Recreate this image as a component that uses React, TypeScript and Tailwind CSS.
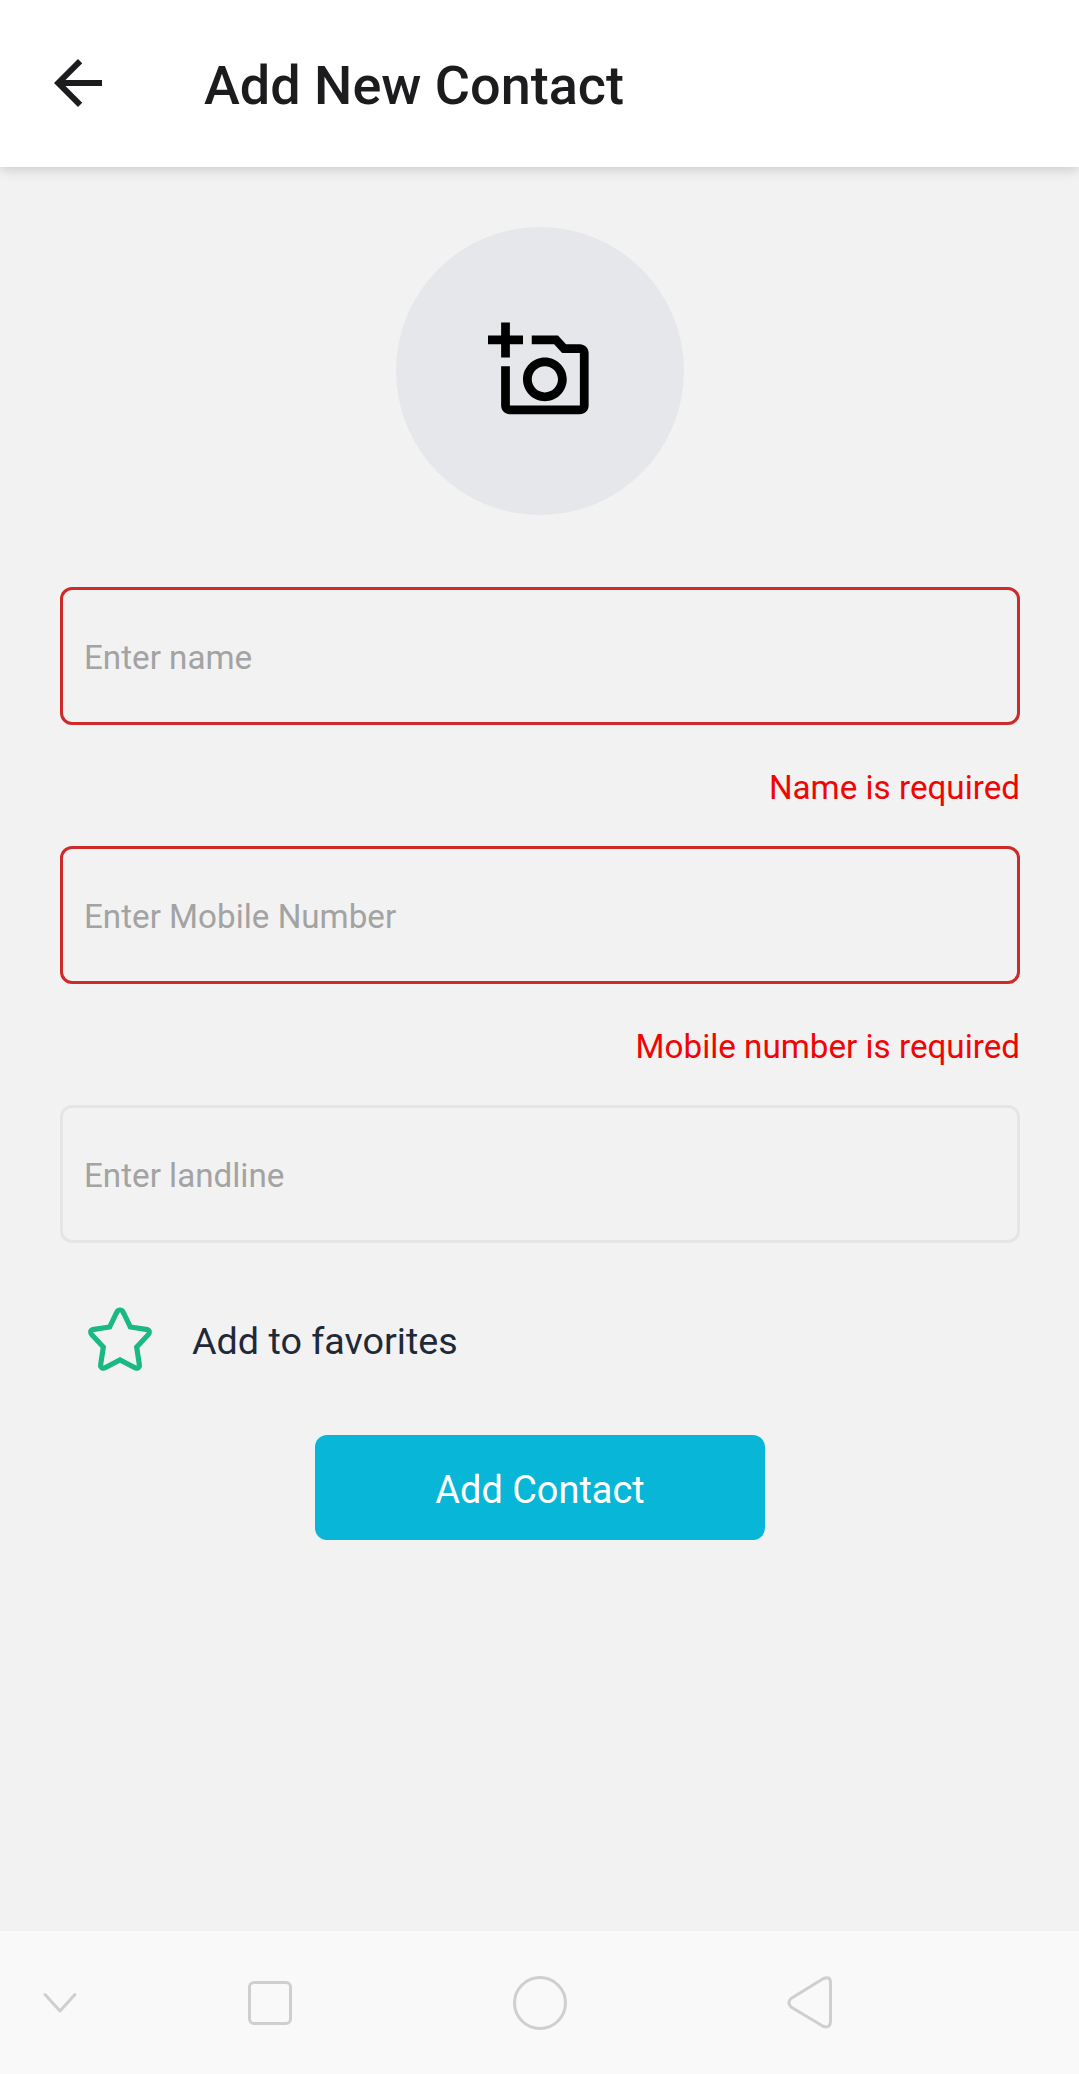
import React from "react";

function Field({ label, invalid }: { label: string; invalid?: boolean }) {
  return (
    <input
      type="text"
      placeholder={label}
      aria-invalid={invalid}
      className={
        "block h-[138px] w-full rounded-[12px] border-[3px] bg-transparent px-[21px] pt-[3px] text-[33.2px] text-gray-800 outline-none placeholder:text-[#a3a3a3] placeholder:opacity-100 " +
        (invalid ? "border-[#cd2a2a]" : "border-[#e5e5e5]")
      }
    />
  );
}

function FieldError({ children }: { children: React.ReactNode }) {
  return (
    <p className="flex h-[121px] items-center justify-end pt-[4px] text-[33.2px] text-[#f00505]">
      {children}
    </p>
  );
}

function Header() {
  return (
    <header className="relative z-10 flex h-[167px] shrink-0 items-center bg-white pl-[42px] shadow-[0_2px_12px_rgba(0,0,0,0.18)]">
      <button aria-label="Back" className="mb-[2px] size-[72px]">
        <svg viewBox="0 0 24 24" className="size-[72px] fill-[#1c1c1e]">
          <path d="M20 11H7.83l5.59-5.59L12 4l-8 8 8 8 1.41-1.41L7.83 13H20v-2z" />
        </svg>
      </button>
      <h1 className="ml-[90px] pt-[5px] text-[54px] leading-[64px] font-medium whitespace-nowrap text-[#1c1c1e]">
        Add New Contact
      </h1>
    </header>
  );
}

function SystemNav() {
  return (
    <nav className="flex h-[143px] shrink-0 items-center bg-[#f9f9f9] text-[#cfcfcf]">
      <div className="flex w-[120px] justify-center">
        <svg viewBox="0 0 60 60" className="size-[60px]" fill="none" stroke="currentColor" strokeWidth="3" strokeLinecap="round" strokeLinejoin="round">
          <path d="M15 21.500L30 38L45 21.500" />
        </svg>
      </div>
      <div className="flex w-[300px] justify-center">
        <div className="size-[44px] rounded-[6px] border-[3px] border-current" />
      </div>
      <div className="flex w-[240px] justify-center">
        <div className="size-[54px] rounded-full border-[3px] border-current" />
      </div>
      <div className="flex w-[300px] justify-center">
        <svg viewBox="0 0 60 60" className="size-[60px]" fill="none" stroke="currentColor" strokeWidth="3" strokeLinejoin="round">
          <path d="M43.500 5.500Q50.500 2.500 50.500 10V48Q50.500 55.500 43.500 53.500L11 34Q7 29.500 11 25.500Z" />
        </svg>
      </div>
    </nav>
  );
}

export default function App() {
  return (
    <div className="flex h-[2074px] w-[1079px] flex-col overflow-hidden bg-[#f2f2f2] font-['Roboto',sans-serif]">
      <Header />
      <main className="flex flex-1 flex-col pr-[59px] pl-[60px] pt-[59.5px]">
        <button aria-label="Add photo" className="flex size-[288px] shrink-0 items-center justify-center self-center rounded-full bg-[#e5e7eb]">
          <svg viewBox="0 0 24 24" className="size-[105px] fill-black">
            <path d="M21 6h-3.170L16 4h-6v2h5.120l1.830 2H21v12H5v-9H3v9c0 1.100.9 2 2 2h16c1.100 0 2-.9 2-2V8c0-1.100-.9-2-2-2zM8 14c0 2.760 2.240 5 5 5s5-2.240 5-5-2.240-5-5-5-5 2.240-5 5zm5-3c1.650 0 3 1.350 3 3s-1.350 3-3 3-3-1.350-3-3 1.350-3 3-3zM5 6h3V4H5V1H3v3H0v2h3v3h2V6z" />
          </svg>
        </button>
        <form className="mt-[72.5px] flex flex-col">
          <Field label="Enter name" invalid />
          <FieldError>Name is required</FieldError>
          <Field label="Enter Mobile Number" invalid />
          <FieldError>Mobile number is required</FieldError>
          <Field label="Enter landline" />
          <div className="mt-[60px] flex h-[72px] items-center pl-[24px]">
            <svg viewBox="132 637 216 216" className="size-[72px] shrink-0" fill="none" stroke="#1ab883" strokeWidth="15.500" strokeLinejoin="miter">
              <path d="M240 658Q247 658 250 665L271 709L318 716Q327 717.500 328 723Q329 728 323 734L290 769L298 822Q299 829 294 831.500Q289 834 282 830L240 808L198 830Q191 834 186 831.500Q181 829 182 822L190 769L157 734Q151 728 152 723Q153 717.500 162 716L209 709L230 665Q233 658 240 658Z" />
            </svg>
            <span className="ml-[36px] pt-[5px] text-[37.700px] text-[#1f2937]">Add to favorites</span>
          </div>
          <button type="button" className="mt-[60px] flex h-[105px] w-[450px] items-center justify-center self-center rounded-[12px] bg-[#08b6d8] pt-[5px] text-[37.900px] text-white">
            Add Contact
          </button>
        </form>
      </main>
      <SystemNav />
    </div>
  );
}
